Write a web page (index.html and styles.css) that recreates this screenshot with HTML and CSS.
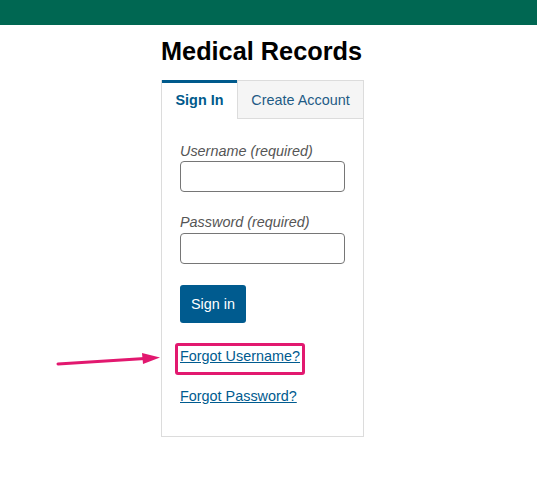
FILE: index.html
```html
<!DOCTYPE html>
<html lang="en">
<head>
<meta charset="utf-8">
<title>Medical Records</title>
<link rel="stylesheet" href="styles.css">
</head>
<body>
<header class="topbar"></header>
<main class="page">
  <div class="panel">
    <h1 class="title">Medical Records</h1>
    <div class="card">
      <div class="tabs">
        <div class="tab tab-active">Sign In</div>
        <div class="tab tab-other">Create Account</div>
      </div>
      <form class="form">
        <label class="label" for="u">Username (required)</label>
        <input class="input" id="u" type="text">
        <label class="label label-pw" for="p">Password (required)</label>
        <input class="input" id="p" type="password">
        <button class="btn" type="button">Sign in</button>
        <div class="links">
          <a class="link link-highlight" href="#">Forgot Username?<span class="highlight"></span></a>
          <a class="link link-second" href="#">Forgot Password?</a>
        </div>
      </form>
    </div>
  </div>
</main>
<svg class="arrow" width="110" height="20" viewBox="0 0 110 20">
  <line x1="3" y1="14" x2="90" y2="8.5" stroke="#e2186f" stroke-width="3" stroke-linecap="round"/>
  <polygon points="87,3 105,7.5 88,14" fill="#e2186f"/>
</svg>
</body>
</html>
```

FILE: styles.css
```css
* { box-sizing: border-box; }
html, body { margin: 0; padding: 0; background: #fff; }
body {
  font-family: "Liberation Sans", Arial, sans-serif;
  color: #000;
  position: relative;
}
.topbar {
  height: 25px;
  background: #006752;
}
.page { padding: 0; }
.panel {
  width: 203px;
  margin-left: 161px;
}
.title {
  margin: 12px 0 14px;
  font-size: 25.3px;
  line-height: 29px;
  font-weight: bold;
  white-space: nowrap;
}
.card {
  border: 1px solid #dcdcdc;
  width: 203px;
}
.tabs {
  display: flex;
  height: 38px;
}
.tab {
  font-size: 14.4px;
  line-height: 16px;
  text-align: center;
}
.tab-active {
  width: 75px;
  margin-top: -1px;
  height: 39px;
  border-top: 3px solid #005a8c;
  padding-top: 9px;
  font-weight: bold;
  color: #005a8c;
  background: #fff;
}
.tab-other {
  flex: 1;
  height: 38px;
  border-left: 1px solid #dcdcdc;
  border-bottom: 1px solid #dcdcdc;
  background: #f5f5f5;
  padding-top: 11px;
  color: #1f5b85;
}
.form {
  display: flex;
  flex-direction: column;
  align-items: flex-start;
  padding: 24px 18px 32px;
}
.label {
  font-size: 14.4px;
  line-height: 16px;
  font-style: italic;
  color: #555;
  margin-bottom: 2px;
}
.label-pw { margin-top: 22px; margin-bottom: 3px; }
.input {
  width: 165px;
  height: 31px;
  border: 1px solid #767676;
  border-radius: 4px;
  margin: 0;
  padding: 0 6px;
  font: inherit;
}
.btn {
  margin-top: 21px;
  width: 66px;
  height: 38px;
  background: #005b8f;
  color: #fff;
  border: 0;
  border-radius: 3px;
  font-family: "Liberation Sans", Arial, sans-serif;
  font-size: 14.4px;
  padding: 0;
}
.links {
  margin-top: 25px;
  display: flex;
  flex-direction: column;
  align-items: flex-start;
  gap: 24px;
}
.link {
  font-size: 14.4px;
  line-height: 16px;
  color: #005b8f;
  text-decoration: underline;
}
.link-highlight { position: relative; }
.highlight {
  position: absolute;
  left: -5px;
  right: -5px;
  top: -5px;
  bottom: -11px;
  border: 3px solid #e2186f;
  border-radius: 3px;
}
.arrow {
  position: absolute;
  left: 55px;
  top: 350px;
}
```
